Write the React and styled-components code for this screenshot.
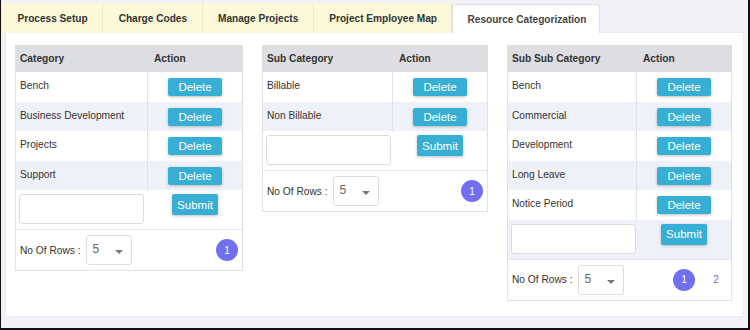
import React from 'react';
import styled, { createGlobalStyle } from 'styled-components';

const GlobalStyle = createGlobalStyle`
    body{
        margin: 0;
        font-family: "Liberation Sans", Arial, sans-serif;
        color: #333;
    }
`;

const tabs = ['Process Setup', 'Charge Codes', 'Manage Projects', 'Project Employee Map', 'Resource Categorization'];

const tables = [
    { title: 'Category', width: 228, split: 133, rows: ['Bench', 'Business Development', 'Projects', 'Support'], pages: [1] },
    { title: 'Sub Category', width: 226, split: 131, rows: ['Billable', 'Non Billable'], pages: [1] },
    { title: 'Sub Sub Category', width: 225, split: 130, rows: ['Bench', 'Commercial', 'Development', 'Long Leave', 'Notice Period'], pages: [1, 2] },
];

const CategoryTable = ({ title, width, split, rows, pages }) => {
    return (
        <Panel $width={width}>
            <HeadRow $split={split}>
                <HeadCell>{title}</HeadCell>
                <HeadCell $action>Action</HeadCell>
            </HeadRow>
            {rows.map((name, i) => (
                <Row key={name} $split={split} $stripe={i % 2 === 1}>
                    <NameCell>{name}</NameCell>
                    <ActionCell>
                        <Button $w={54} $h={18}>Delete</Button>
                    </ActionCell>
                </Row>
            ))}
            <InputRow $split={split} $stripe={rows.length % 2 === 1}>
                <TextBox />
                <ActionCell $top={4}>
                    <Button $w={46} $h={21}>Submit</Button>
                </ActionCell>
            </InputRow>
            <Footer>
                <Label>No Of Rows :</Label>
                <Select>
                    <span>5</span>
                    <Caret />
                </Select>
                <Pager>
                    {pages.map((p) => (
                        <Page key={p} $active={p === 1}>{p}</Page>
                    ))}
                </Pager>
            </Footer>
        </Panel>
    );
};

const App = () => {
    return (
        <>
            <GlobalStyle />
            <Screen>
                <TabBar>
                    {tabs.map((t, i) => (
                        <Tab key={t} $active={i === tabs.length - 1}>{t}</Tab>
                    ))}
                </TabBar>
                <Card>
                    {tables.map((t) => (
                        <CategoryTable key={t.title} {...t} />
                    ))}
                </Card>
            </Screen>
        </>
    );
};

const Screen = styled.div`
    width: 750px;
    height: 330px;
    box-sizing: border-box;
    background: #f0f2f7;
    border-left: 1px solid #111;
    border-right: 2px solid #111;
    border-bottom: 2px solid #111;
    padding: 3px 0 0 1px;
`;

const TabBar = styled.div`
    display: flex;
    height: 30px;
`;

const Tab = styled.div`
    display: flex;
    align-items: center;
    padding: 0 14.5px 0 15.5px;
    box-sizing: border-box;
    font-size: 10.1px;
    font-weight: bold;
    color: ${(p) => (p.$active ? '#444' : '#333')};
    background: ${(p) => (p.$active ? '#fff' : '#fbf9d8')};
    border-right: 1px solid ${(p) => (p.$active ? '#dedede' : '#f0ebbd')};
    ${(p) => p.$active && `
        margin-top: 1px;
        padding: 0 13px 0 14px;
        border: 1px solid #dedede;
        border-bottom: none;
        border-radius: 3px 3px 0 0;
    `}
`;

const Card = styled.div`
    margin-left: 4px;
    width: 737px;
    height: 283px;
    box-sizing: border-box;
    background: #fff;
    box-shadow: 0 0 3px rgba(0, 0, 0, 0.06);
    padding: 12px 0 0 9px;
    display: flex;
    align-items: flex-start;
    gap: 19px;
`;

const Panel = styled.div`
    width: ${(p) => p.$width}px;
    box-sizing: border-box;
    border: 1px solid #e2e2e2;
    border-top: none;
    font-size: 10.2px;
`;

const HeadRow = styled.div`
    display: grid;
    grid-template-columns: ${(p) => p.$split}px 1fr;
    height: 27px;
    background: #dddee2;
    margin: 0 -1px;
`;

const HeadCell = styled.div`
    display: flex;
    align-items: center;
    padding-left: ${(p) => (p.$action ? 6 : 5)}px;
    font-weight: bold;
    color: #333;
`;

const Row = styled.div`
    display: grid;
    grid-template-columns: ${(p) => p.$split - 1}px 1fr;
    height: 29.5px;
    background: ${(p) => (p.$stripe ? '#eef1f8' : '#fff')};
`;

const NameCell = styled.div`
    padding: 7px 4px 0;
    line-height: 13px;
    border-right: 1px solid #dfe1e6;
`;

const ActionCell = styled.div`
    display: flex;
    justify-content: center;
    align-items: flex-start;
    padding-top: ${(p) => p.$top ?? 6}px;
`;

const Button = styled.button`
    width: ${(p) => p.$w}px;
    height: ${(p) => p.$h}px;
    padding: 0;
    border: none;
    border-radius: 2px;
    background: #37afd4;
    color: #fff;
    font-family: "Liberation Sans", Arial, sans-serif;
    font-size: 11.5px;
    box-shadow: 0 1px 3px rgba(0, 0, 0, 0.25);
    cursor: pointer;
`;

const InputRow = styled(Row)`
    height: 39px;
`;

const TextBox = styled.div`
    margin: 4px 0 0 3px;
    width: 125px;
    height: 30px;
    box-sizing: border-box;
    border: 1px solid #dcdcdc;
    border-radius: 3px;
    background: #fff;
`;

const Footer = styled.div`
    display: flex;
    align-items: center;
    height: 40px;
    padding: 0 4px;
    border-top: 1px solid #e6e6e6;
`;

const Label = styled.span`
    color: #333;
`;

const Select = styled.div`
    position: relative;
    margin-left: 5px;
    width: 46px;
    height: 30px;
    box-sizing: border-box;
    border: 1px solid #dcdcdc;
    border-radius: 3px;
    padding: 6px 0 0 6px;
    font-size: 12px;
    color: #666;
`;

const Caret = styled.span`
    position: absolute;
    right: 8px;
    top: 14px;
    border-left: 4px solid transparent;
    border-right: 4px solid transparent;
    border-top: 4px solid #777;
`;

const Pager = styled.div`
    display: flex;
    gap: 10px;
    margin-left: auto;
`;

const Page = styled.span`
    width: 22px;
    height: 22px;
    border-radius: 50%;
    display: flex;
    align-items: center;
    justify-content: center;
    font-size: 10px;
    color: ${(p) => (p.$active ? '#fff' : '#6f6fe8')};
    background: ${(p) => (p.$active ? '#7070f0' : 'transparent')};
`;

export default App;
